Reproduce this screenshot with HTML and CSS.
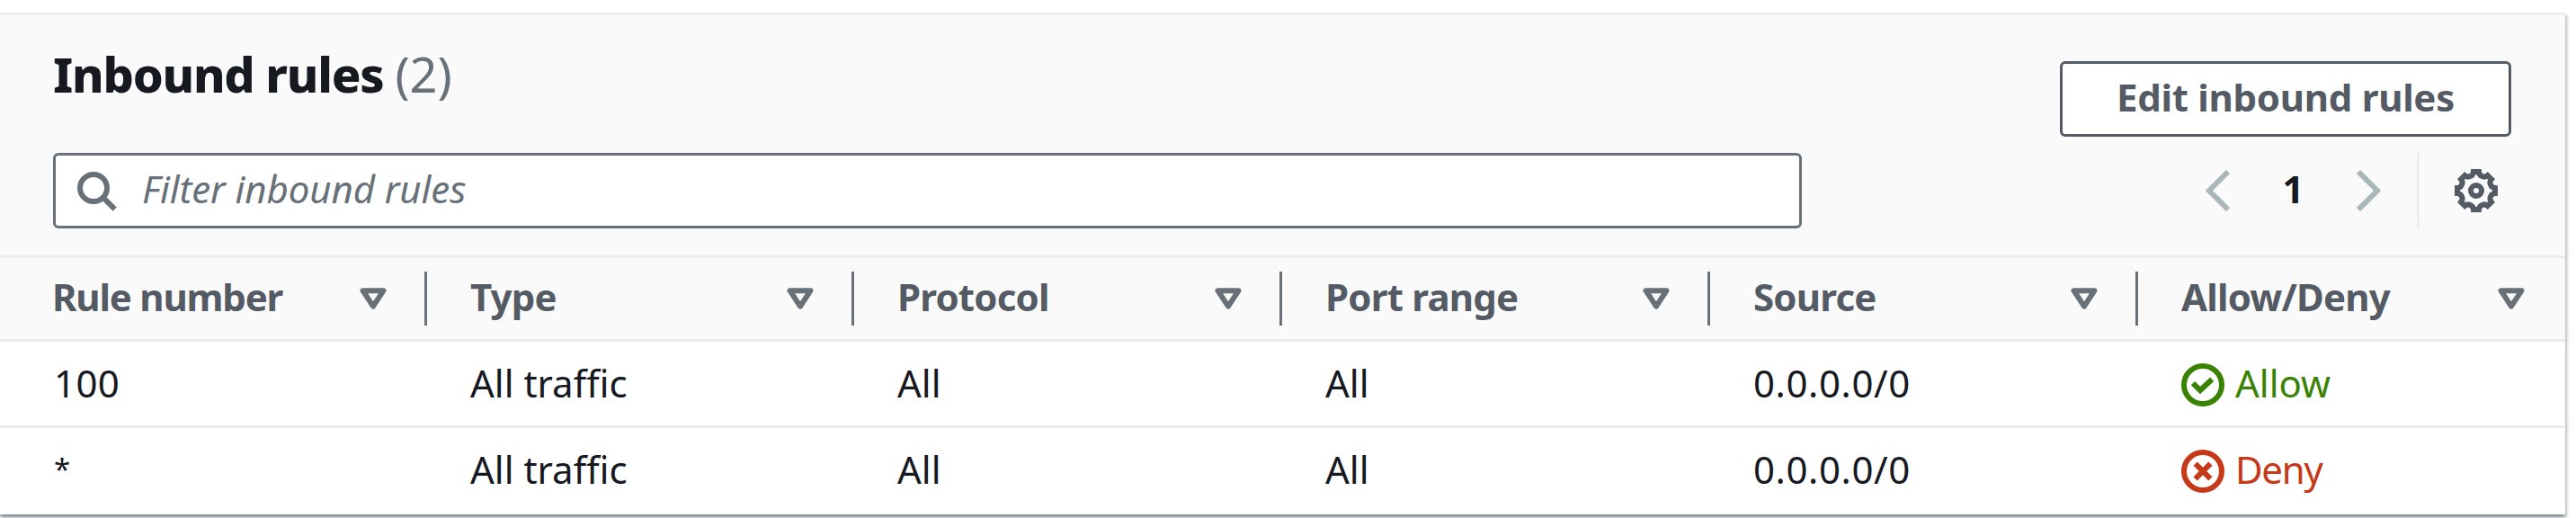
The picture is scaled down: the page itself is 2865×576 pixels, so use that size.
FILE: index.html
```html
<!DOCTYPE html>
<html lang="en">
<head>
<meta charset="utf-8">
<title>Inbound rules</title>
<link rel="stylesheet" href="styles.css">
</head>
<body>
<svg class="defs" aria-hidden="true">
  <symbol id="sort" viewBox="0 0 30 24"><path d="M3.5 3.2h23L15 20.6z" fill="none" stroke="currentColor" stroke-width="6" stroke-linejoin="round"/></symbol>
  <symbol id="ok" viewBox="0 0 16 16"><g fill="none" stroke="currentColor" stroke-width="2"><circle cx="8" cy="8" r="7"/><path d="M4.3 7.4 7 10l4.4-4.1"/></g></symbol>
  <symbol id="no" viewBox="0 0 16 16"><g fill="none" stroke="currentColor" stroke-width="2"><circle cx="8" cy="8" r="7"/><path d="M5.2 5.2l5.6 5.6M10.8 5.2l-5.6 5.6"/></g></symbol>
</svg>
<section class="panel">
  <header class="header">
    <div class="title-row">
      <h2 class="title">Inbound rules <span class="count">(2)</span></h2>
      <button class="button"><span class="button-text">Edit inbound rules</span></button>
    </div>
    <div class="tools">
      <div class="search">
        <svg class="icon" viewBox="0 0 16 16"><g fill="none" stroke="currentColor" stroke-width="2"><circle cx="7" cy="7" r="5"/><path d="M10.4 10.4l4.5 4.5"/></g></svg>
        <span class="placeholder">Filter inbound rules</span>
      </div>
      <div class="pager">
        <svg class="chevron" viewBox="0 0 28 46"><path d="M25 2 4 23l21 21" fill="none" stroke="currentColor" stroke-width="6"/></svg>
        <span class="page">1</span>
        <svg class="chevron" viewBox="0 0 28 46"><path d="M3 2l21 21L3 44" fill="none" stroke="currentColor" stroke-width="6"/></svg>
        <span class="divider"></span>
        <svg class="icon gear" viewBox="-8 -8 16 16"><g fill="none" stroke="currentColor" stroke-width="2"><circle r="2"/><path d="M-1-7H1A1.94 1.94 0 0 0 4.24-5.66L5.66-4.24A1.94 1.94 0 0 0 7-1V1A1.94 1.94 0 0 0 5.66 4.24L4.24 5.66A1.94 1.94 0 0 0 1 7H-1A1.94 1.94 0 0 0-4.24 5.66L-5.66 4.24A1.94 1.94 0 0 0-7 1V-1A1.94 1.94 0 0 0-5.66-4.24L-4.24-5.66A1.94 1.94 0 0 0-1-7z"/></g></svg>
      </div>
    </div>
  </header>
  <div class="row head">
    <div class="cell"><span class="label label-tight">Rule number</span><svg class="sort"><use href="#sort"/></svg></div>
    <div class="cell"><span class="label">Type</span><svg class="sort"><use href="#sort"/></svg></div>
    <div class="cell"><span class="label">Protocol</span><svg class="sort"><use href="#sort"/></svg></div>
    <div class="cell"><span class="label">Port range</span><svg class="sort"><use href="#sort"/></svg></div>
    <div class="cell"><span class="label">Source</span><svg class="sort"><use href="#sort"/></svg></div>
    <div class="cell"><span class="label">Allow/Deny</span><svg class="sort"><use href="#sort"/></svg></div>
  </div>
  <div class="row">
    <div class="cell number">100</div>
    <div class="cell">All traffic</div>
    <div class="cell">All</div>
    <div class="cell">All</div>
    <div class="cell address">0.0.0.0/0</div>
    <div class="cell status allow"><svg class="icon"><use href="#ok"/></svg><span>Allow</span></div>
  </div>
  <div class="row last">
    <div class="cell wildcard">*</div>
    <div class="cell">All traffic</div>
    <div class="cell">All</div>
    <div class="cell">All</div>
    <div class="cell address">0.0.0.0/0</div>
    <div class="cell status deny"><svg class="icon"><use href="#no"/></svg><span>Deny</span></div>
  </div>
</section>
</body>
</html>
```
FILE: styles.css
```css
* { box-sizing: border-box; }
body {
  margin: 0;
  padding-top: 14px;
  height: 576px;
  overflow: hidden;
  background: #fff;
  color: #16191f;
  font: 42px/60px "Noto Sans", "Open Sans", sans-serif;
}
.defs { display: none; }
svg { display: block; flex: none; }
.panel {
  width: 2853px;
  height: 558px;
  background: #fff;
  border-top: 3px solid #eaeded;
  box-shadow: 0 3px 3px rgba(0, 28, 36, .3), 3px 3px 3px rgba(0, 28, 36, .15), -3px 3px 3px rgba(0, 28, 36, .15);
}
.header {
  height: 270px;
  padding: 30px 60px 0 59px;
  background: #fafafa;
  border-bottom: 3px solid #eaeded;
}
.title-row { display: flex; justify-content: space-between; height: 123px; }
.title {
  margin: 0;
  font-size: 54px;
  line-height: 70px;
  font-weight: 800;
  letter-spacing: -1.2px;
}
.count { font-weight: 400; color: #687078; letter-spacing: 0; }
.button {
  width: 502px;
  height: 84px;
  margin-top: 21px;
  padding: 0 0 4px;
  border: 3px solid #545b64;
  border-radius: 6px;
  background: #fff;
  color: #545b64;
  font: 700 42px/60px "Noto Sans", "Open Sans", sans-serif;
}
.button-text { letter-spacing: -.3px; }
.tools { display: flex; justify-content: space-between; height: 84px; }
.search {
  display: flex;
  align-items: center;
  gap: 27px;
  width: 1945px;
  padding-left: 21px;
  border: 3px solid #687078;
  border-radius: 6px;
  background: #fff;
  color: #687078;
}
.placeholder { font-style: italic; padding-bottom: 4px; letter-spacing: -.1px; }
.icon { width: 48px; height: 48px; }
.pager { display: flex; align-items: center; padding-right: 15px; }
.chevron { width: 28px; height: 46px; color: #aab7b8; }
.page { width: 139px; padding-bottom: 4px; text-align: center; font-weight: 700; }
.divider { width: 3px; height: 84px; margin: 0 39px 0 40px; background: #eaeded; }
.gear { color: #545b64; }
.row {
  display: grid;
  grid-template-columns: 475px 475px 476px 476px 476px 475px;
  height: 96px;
  padding-bottom: 1px;
  border-bottom: 3px solid #eaeded;
}
.last { padding-bottom: 4px; border-bottom: 0; }
.cell { display: flex; align-items: center; padding-left: 48px; }
.cell:first-child { padding-left: 60px; }
.head {
  height: 93px;
  padding: 15px 0;
  background: #fafafa;
  color: #545b64;
  font-weight: 700;
}
.head .cell { justify-content: space-between; padding-right: 42px; border-right: 3px solid #687078; }
.head .cell:first-child { padding-left: 58px; }
.head .cell:last-child { padding-right: 45px; border-right: 0; }
.label { letter-spacing: -.8px; line-height: 56px; padding-bottom: 4px; }
.label-tight { letter-spacing: -1.2px; }
.sort { width: 30px; height: 24px; color: #687078; }
.number { letter-spacing: .4px; }
.wildcard { font-size: 33px; }
.address { letter-spacing: .6px; }
.status { gap: 12px; }
.status .icon { margin-top: 3px; }
.allow { color: #398204; }
.deny { color: #c53919; }
.deny span { letter-spacing: -1.3px; }
```
